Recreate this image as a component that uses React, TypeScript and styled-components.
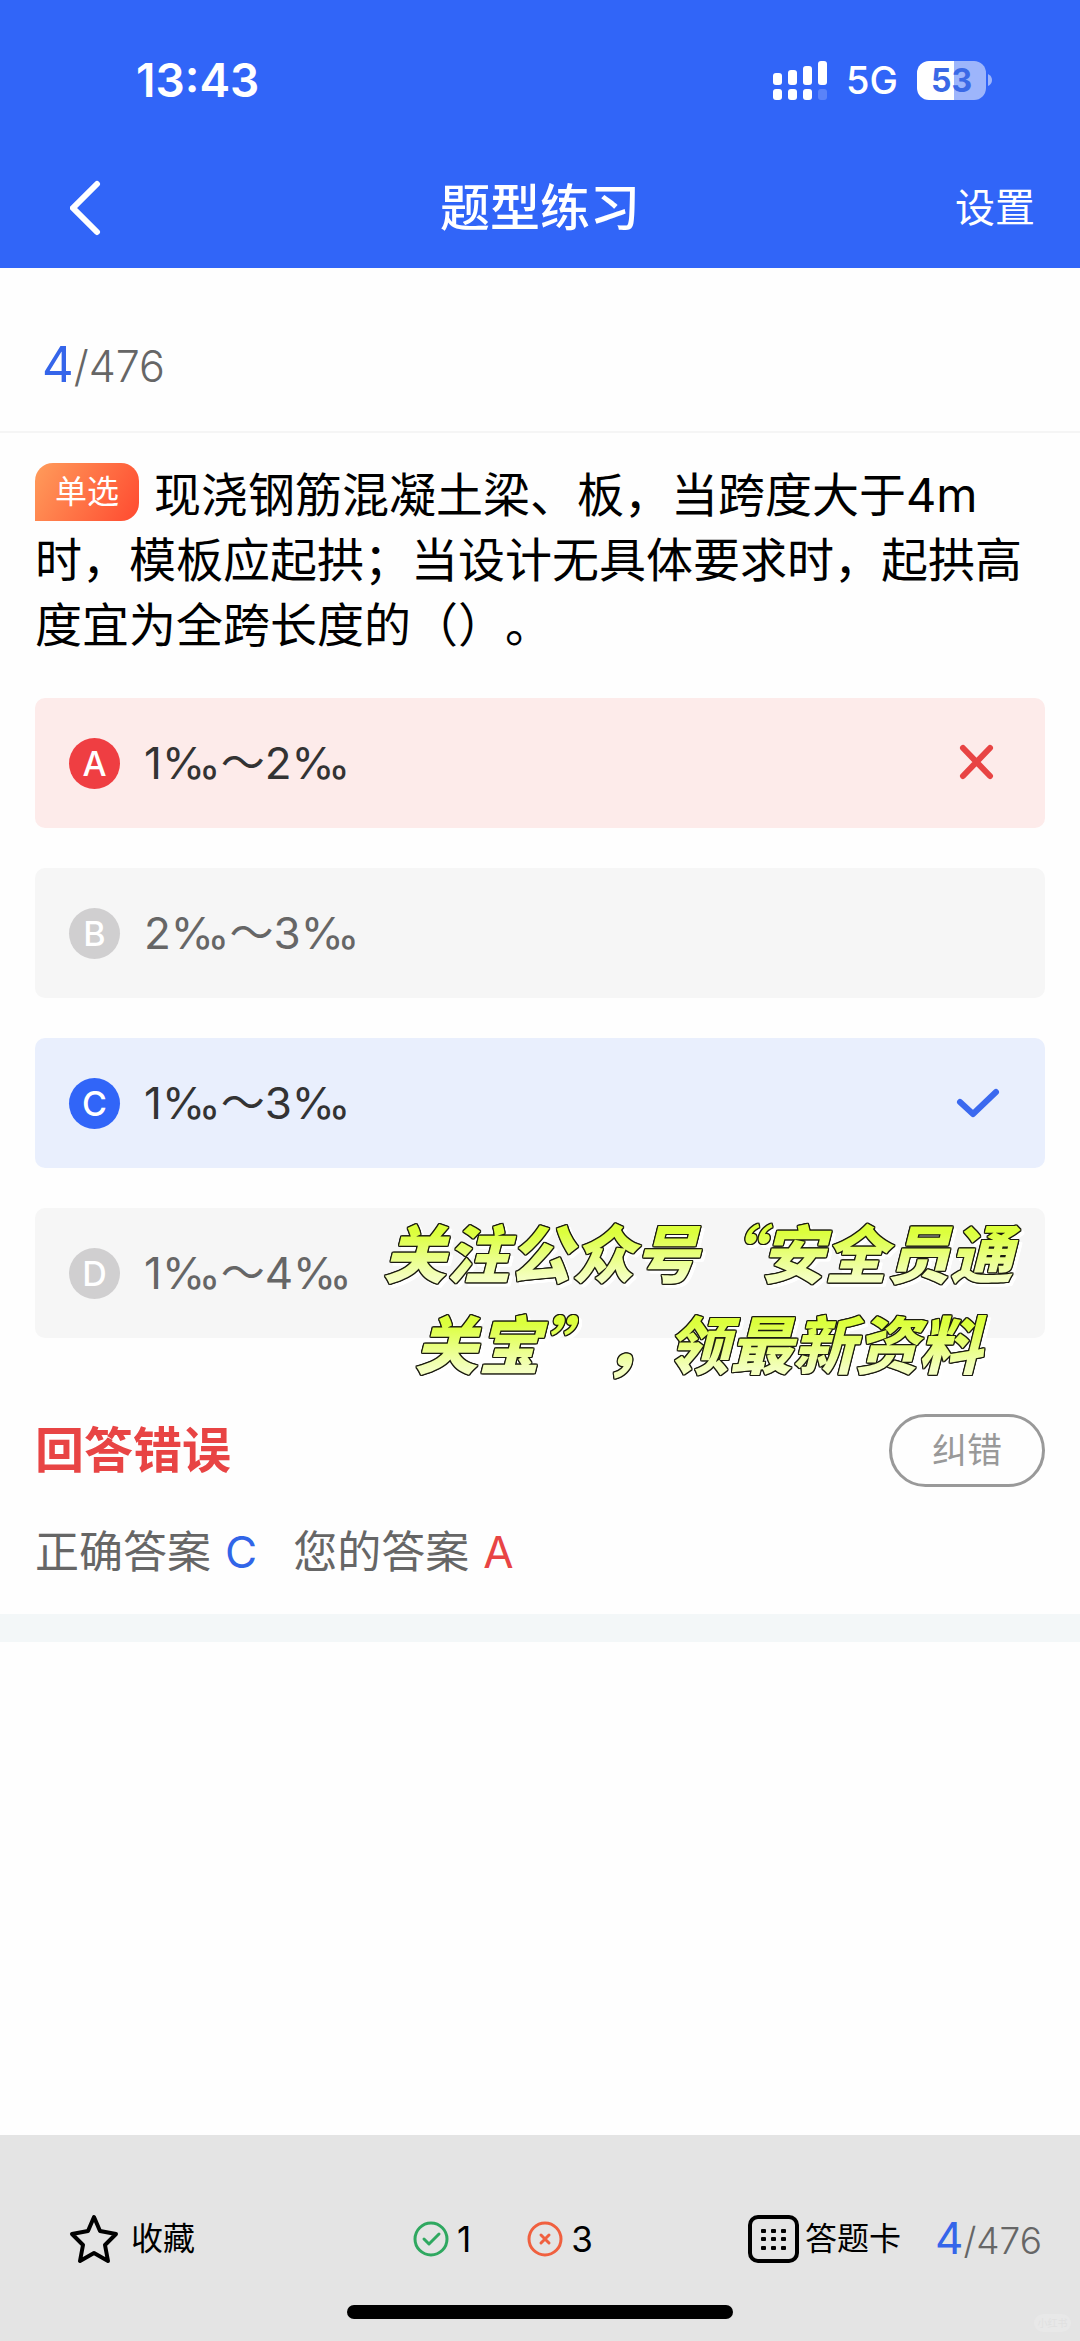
import React from "react";
import styled, { createGlobalStyle } from "styled-components";

const Global = createGlobalStyle`
  *, *::before, *::after { box-sizing: border-box; }
  html, body, #root { height: 100%; }
  body {
    margin: 0;
    background: #fefefe;
    color: #000;
    font-family: Inter, "Noto Sans CJK SC", sans-serif;
  }
  button {
    margin: 0;
    padding: 0;
    border: 0;
    background: none;
    color: inherit;
    font: inherit;
    cursor: pointer;
  }
  svg { display: block; flex: none; }
`;

const Page = styled.div`
  min-height: 100vh;
  display: flex;
  flex-direction: column;
`;

const Header = styled.header`
  background: #3165f8;
  color: #fff;
`;

const StatusBar = styled.div`
  display: flex;
  align-items: center;
  justify-content: space-between;
  height: 160px;
  padding: 0 88px 0 136px;
`;

const Clock = styled.time`
  font-size: 46px;
  font-weight: 600;
  line-height: 56px;
`;

const StatusIcons = styled.div`
  display: flex;
  align-items: center;
  gap: 19px;
`;

const Network = styled.span`
  font-size: 38px;
  font-weight: 500;
  line-height: 46px;
`;

const Battery = styled.div`
  display: flex;
  align-items: center;
  gap: 2px;
`;

const BatteryBody = styled.span`
  width: 69px;
  height: 39px;
  border-radius: 12px;
  background: linear-gradient(90deg, #fff 53%, #9db5fb 53%);
  color: #3a69e6;
  font-size: 32px;
  font-weight: 700;
  line-height: 39px;
  text-align: center;
`;

const NavBar = styled.nav`
  display: grid;
  grid-template-columns: 1fr auto 1fr;
  align-items: center;
  height: 108px;
  padding: 0 45px 12px;
`;

const Title = styled.h1`
  margin: 0;
  font-size: 50px;
  font-weight: 500;
  line-height: 72px;
`;

const SettingsButton = styled.button`
  justify-self: end;
  font-size: 40px;
  line-height: 60px;
`;

const BackButton = styled.button`
  justify-self: start;
  padding-left: 25px;
`;

const CounterRow = styled.div`
  display: flex;
  align-items: center;
  height: 165px;
  padding: 32px 42px 0;
  border-bottom: 2px solid #f5f5f5;
`;

const CounterText = styled.span<{ $small?: boolean }>`
  color: #666;
  font-size: ${(p) => (p.$small ? 37 : 43)}px;
  font-weight: 300;
  line-height: 60px;
`;

const Current = styled.span<{ $small?: boolean }>`
  color: #3565ea;
  font-size: ${(p) => (p.$small ? 44 : 49)}px;
  font-weight: 400;
`;

const Main = styled.main`
  flex: 1;
`;

const Question = styled.section`
  padding: 29px 35px 30px;
`;

const Stem = styled.p`
  margin: 0 0 41px;
  font-size: 47px;
  line-height: 65px;
  text-spacing-trim: space-all;
`;

const TypeBadge = styled.span`
  display: inline-block;
  width: 104px;
  height: 58px;
  margin-right: 15px;
  border-radius: 18px 18px 18px 0;
  background: linear-gradient(120deg, #ff9c5b, #ff4a30);
  color: #fff;
  font-size: 32px;
  line-height: 58px;
  text-align: center;
  vertical-align: 9px;
`;

const OptionArea = styled.div`
  position: relative;
`;

const OptionList = styled.ul`
  display: flex;
  flex-direction: column;
  gap: 40px;
  margin: 0;
  padding: 0;
  list-style: none;
`;

type State = "wrong" | "right" | "idle";

const cardColor = { wrong: "#fdebea", right: "#e9effd", idle: "#f6f6f6" };
const dotColor = { wrong: "#ef3e42", right: "#3165f8", idle: "#d0cfd0" };

const OptionCard = styled.button<{ $state: State }>`
  display: flex;
  align-items: center;
  width: 100%;
  height: 130px;
  padding: 0 44px 0 34px;
  border-radius: 10px;
  background: ${(p) => cardColor[p.$state]};
  color: ${(p) => (p.$state === "idle" ? "#666" : "#333")};
  font-size: 44px;
  text-align: left;
`;

const Letter = styled.span<{ $state: State }>`
  width: 51px;
  height: 51px;
  margin-right: 24px;
  border-radius: 50%;
  background: ${(p) => dotColor[p.$state]};
  color: #fff;
  font-size: 34px;
  font-weight: 500;
  line-height: 51px;
  text-align: center;
`;

const OptionText = styled.span`
  flex: 1;
  line-height: 60px;
`;

const Promo = styled.p`
  position: absolute;
  top: 507px;
  right: 16px;
  display: flex;
  flex-direction: column;
  align-items: center;
  margin: 0;
  filter: drop-shadow(1px 0 0 #1b1b10) drop-shadow(-1px 0 0 #1b1b10)
    drop-shadow(0 1px 0 #1b1b10) drop-shadow(0 -1px 0 #1b1b10)
    drop-shadow(3px 3px 0 #fff);
  pointer-events: none;
`;

const PromoLine = styled.span`
  padding: 0 16px;
  background: linear-gradient(180deg, #dcff3c 30%, #f4ffc0 80%);
  background-clip: text;
  -webkit-background-clip: text;
  color: transparent;
  font-family: "Noto Sans CJK SC", sans-serif;
  font-size: 63px;
  font-style: italic;
  font-weight: 900;
  line-height: 91px;
  white-space: nowrap;
`;

const ResultRow = styled.div`
  display: flex;
  align-items: center;
  justify-content: space-between;
  margin-top: 76px;
`;

const Verdict = styled.h2`
  margin: 0;
  color: #e84444;
  font-size: 49px;
  font-weight: 700;
  line-height: 72px;
`;

const ReportButton = styled.button`
  width: 156px;
  height: 73px;
  border: 3px solid #999;
  border-radius: 37px;
  color: #999;
  font-size: 35px;
  line-height: 67px;
`;

const AnswerRow = styled.div`
  display: flex;
  gap: 36px;
  margin-top: 33px;
  color: #666;
  font-size: 44px;
  line-height: 64px;
`;

const Mark = styled.span<{ $wrong?: boolean }>`
  margin-left: 14px;
  color: ${(p) => (p.$wrong ? "#e84444" : "#3165e8")};
`;

const Separator = styled.div`
  height: 28px;
  background: #f3f7f8;
`;

const Footer = styled.footer`
  position: relative;
  background: #e4e4e4;
  padding-bottom: 22px;
`;

const Toolbar = styled.div`
  display: flex;
  align-items: center;
  justify-content: space-between;
  height: 170px;
  padding: 38px 38px 0 69px;
  font-size: 32px;
`;

const Tallies = styled.div`
  display: flex;
  align-items: center;
  gap: 56px;
  margin-left: 63px;
`;

const SheetGroup = styled.div`
  display: flex;
  align-items: center;
  gap: 34px;
`;

const Tool = styled.button<{ $gap: number }>`
  display: flex;
  align-items: center;
  gap: ${(p) => p.$gap}px;
  line-height: 48px;
`;

const Tally = styled.span`
  display: flex;
  align-items: center;
  gap: 8px;
  font-size: 35px;
  line-height: 48px;
`;

const HomeIndicator = styled.div`
  width: 386px;
  height: 14px;
  margin: 0 auto;
  border-radius: 7px;
  background: #000;
`;

const Stamp = styled.span`
  position: absolute;
  right: 9px;
  bottom: 9px;
  width: 37px;
  height: 18px;
  border-radius: 9px;
  background: #e8e8e8;
  color: #e0e0e0;
  font-size: 10px;
  line-height: 18px;
  text-align: center;
`;

const SignalIcon = () => (
  <svg width="54" height="39" viewBox="0 0 54 39" fill="#fff" aria-hidden="true">
    <rect x="0" y="12" width="9" height="12" rx="3" />
    <rect x="15" y="9" width="9" height="15" rx="3" />
    <rect x="30" y="5" width="9" height="19" rx="3" />
    <rect x="45" y="0" width="9" height="24" rx="3" />
    <rect x="0" y="28" width="9" height="11" rx="3" />
    <rect x="15" y="28" width="9" height="11" rx="3" />
    <rect x="30" y="28" width="9" height="11" rx="3" />
    <rect x="45" y="28" width="9" height="11" rx="3" opacity="0.2" />
  </svg>
);

const CrossIcon = () => (
  <svg width="48" height="48" viewBox="0 0 48 48" fill="none" stroke="#e84444" strokeWidth="6" strokeLinecap="round" aria-hidden="true">
    <path d="M10 9 37 37M37 9 10 37" />
  </svg>
);

const CheckIcon = () => (
  <svg width="48" height="48" viewBox="0 0 48 48" fill="none" stroke="#3b69ef" strokeWidth="6" strokeLinecap="round" strokeLinejoin="round" aria-hidden="true">
    <path d="M7 23 20 35 43 13" />
  </svg>
);

const StarIcon = () => (
  <svg width="50" height="50" viewBox="0 0 50 50" fill="none" stroke="#000" strokeWidth="4" strokeLinejoin="round" aria-hidden="true">
    <path d="M25 3 31 17 47 20 36 31 39 47 25 39 11 47 14 31 3 20 19 17Z" />
  </svg>
);

const CardIcon = () => (
  <svg width="51" height="48" viewBox="0 0 51 48" aria-hidden="true">
    <rect x="2" y="2" width="47" height="44" rx="8" fill="none" stroke="#000" strokeWidth="4" />
    {[14, 22, 31].map((y) =>
      [13, 23, 33].map((x) => <rect key={`${x}-${y}`} x={x} y={y} width="5" height="4" rx="1" />)
    )}
  </svg>
);

const RightIcon = () => (
  <svg width="36" height="36" viewBox="0 0 36 36" fill="none" stroke="#2fa860" strokeWidth="3" strokeLinecap="round" strokeLinejoin="round" aria-hidden="true">
    <circle cx="18" cy="18" r="16" />
    <path d="M11 18 16 23 26 13" />
  </svg>
);

const WrongIcon = () => (
  <svg width="36" height="36" viewBox="0 0 36 36" fill="none" stroke="#f0603f" strokeWidth="3" strokeLinecap="round" aria-hidden="true">
    <circle cx="18" cy="18" r="16" />
    <path d="M14 14 22 22M22 14 14 22" />
  </svg>
);

const options: { letter: string; text: string; state: State }[] = [
  { letter: "A", text: "1‰～2‰", state: "wrong" },
  { letter: "B", text: "2‰～3‰", state: "idle" },
  { letter: "C", text: "1‰～3‰", state: "right" },
  { letter: "D", text: "1‰～4‰", state: "idle" },
];

const Counter = ({ small }: { small?: boolean }) => (
  <CounterText $small={small}>
    <Current $small={small}>4</Current>/476
  </CounterText>
);

export default function App() {
  return (
    <Page lang="zh-CN">
      <Global />
      <Header>
        <StatusBar>
          <Clock>13:43</Clock>
          <StatusIcons>
            <SignalIcon />
            <Network>5G</Network>
            <Battery>
              <BatteryBody>53</BatteryBody>
              <svg width="4" height="12" viewBox="0 0 4 12" aria-hidden="true">
                <path d="M0 0Q4 2 4 6T0 12Z" fill="#9db5fb" />
              </svg>
            </Battery>
          </StatusIcons>
        </StatusBar>
        <NavBar>
          <BackButton aria-label="返回">
            <svg width="32" height="56" viewBox="0 0 32 56" fill="none" stroke="#fff" strokeWidth="6" strokeLinecap="round" aria-hidden="true">
              <path d="M27 4 3 28 27 52" />
            </svg>
          </BackButton>
          <Title>题型练习</Title>
          <SettingsButton>设置</SettingsButton>
        </NavBar>
      </Header>

      <Main>
        <CounterRow>
          <Counter />
        </CounterRow>
        <Question>
          <Stem>
            <TypeBadge>单选</TypeBadge>
            现浇钢筋混凝土梁、板，当跨度大于4m时，模板应起拱；当设计无具体要求时，起拱高度宜为全跨长度的（）。
          </Stem>
          <OptionArea>
            <OptionList>
              {options.map((o) => (
                <li key={o.letter}>
                  <OptionCard $state={o.state}>
                    <Letter $state={o.state}>{o.letter}</Letter>
                    <OptionText>{o.text}</OptionText>
                    {o.state === "wrong" && <CrossIcon />}
                    {o.state === "right" && <CheckIcon />}
                  </OptionCard>
                </li>
              ))}
            </OptionList>
            <Promo>
              <PromoLine>关注公众号“安全员通</PromoLine>
              <PromoLine>关宝”，领最新资料</PromoLine>
            </Promo>
          </OptionArea>
          <ResultRow>
            <Verdict>回答错误</Verdict>
            <ReportButton>纠错</ReportButton>
          </ResultRow>
          <AnswerRow>
            <span>正确答案<Mark>C</Mark></span>
            <span>您的答案<Mark $wrong>A</Mark></span>
          </AnswerRow>
        </Question>
        <Separator />
      </Main>

      <Footer>
        <Toolbar>
          <Tool $gap={12}>
            <StarIcon />
            收藏
          </Tool>
          <Tallies>
            <Tally><RightIcon />1</Tally>
            <Tally><WrongIcon />3</Tally>
          </Tallies>
          <SheetGroup>
            <Tool $gap={6}>
              <CardIcon />
              答题卡
            </Tool>
            <Counter small />
          </SheetGroup>
        </Toolbar>
        <HomeIndicator />
        <Stamp>小红书</Stamp>
      </Footer>
    </Page>
  );
}
